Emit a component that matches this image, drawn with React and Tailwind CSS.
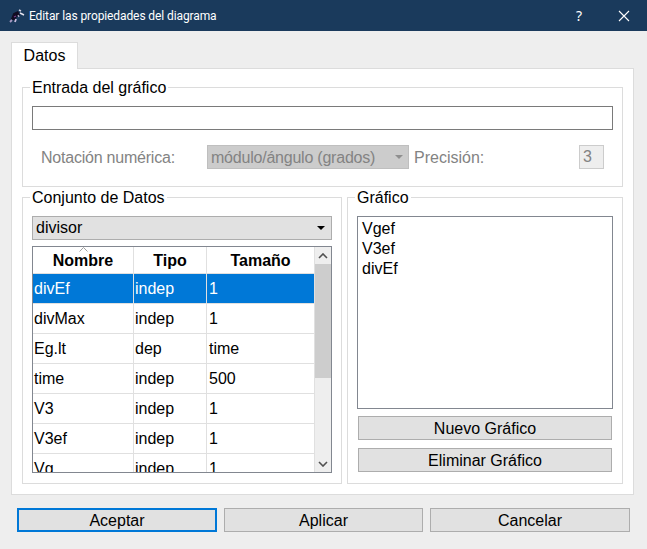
import React from "react";

const rows = [
  ["divEf", "indep", "1"],
  ["divMax", "indep", "1"],
  ["Eg.lt", "dep", "time"],
  ["time", "indep", "500"],
  ["V3", "indep", "1"],
  ["V3ef", "indep", "1"],
  ["Vg", "indep", "1"],
];

function Logo() {
  return (
    <svg width="18" height="16" viewBox="0 0 18 16" className="shrink-0">
      <path d="M5 12 L7 7 L11 5" stroke="#120c22" strokeWidth="4.5" fill="none" />
      <path d="M2 14 L4 12" stroke="#a99ac4" strokeWidth="1.8" fill="none" />
      <path d="M7 14 L8 11" stroke="#c9bfe0" strokeWidth="1.8" fill="none" />
      <path d="M6 9 L8 8" stroke="#7d3f8f" strokeWidth="1.2" fill="none" />
      <path d="M10 7 L11 9" stroke="#b8b0cc" strokeWidth="1.2" fill="none" />
      <path d="M12 5 L16 7" stroke="#e8e6f0" strokeWidth="1.5" fill="none" />
      <path d="M11 2 L13 3" stroke="#d8d4e4" strokeWidth="1.5" fill="none" />
    </svg>
  );
}

function Group({ title, className, children }) {
  return (
    <fieldset className={`border border-[#dcdcdc] px-[9px] ${className}`}>
      <legend className="-ml-[2px] px-[2px] h-[18px] leading-[20px] text-[16px] text-black">{title}</legend>
      {children}
    </fieldset>
  );
}

function Button({ children, className = "border border-[#adadad]" }) {
  return (
    <button className={`h-[24px] pt-[2px] bg-[#e1e1e1] text-[16px] leading-none text-black ${className}`}>
      {children}
    </button>
  );
}

function Chevron({ up }) {
  return (
    <svg width="10" height="6" viewBox="0 0 10 6">
      <path d={up ? "M1 5 L5 1 L9 5" : "M1 1 L5 5 L9 1"} stroke="#505050" strokeWidth="1.6" fill="none" />
    </svg>
  );
}

function DataTable() {
  return (
    <div className="mt-[6px] h-[227px] border border-[#828790] bg-white flex overflow-hidden">
      <div className="w-[281px] shrink-0">
        <div className="relative flex h-[27px] font-bold text-[16px] leading-[27px] text-center border-b border-[#e0e0e0]">
          <div className="w-[101px] border-r border-[#e0e0e0]">Nombre</div>
          <div className="w-[73px] border-r border-[#e0e0e0]">Tipo</div>
          <div className="w-[107px]">Tamaño</div>
          <svg width="9" height="5" viewBox="0 0 9 5" className="absolute left-[46px] top-0">
            <path d="M0.5 4.5 L4.5 0.5 L8.5 4.5" stroke="#a0a0a0" fill="none" />
          </svg>
        </div>
        {rows.map((row, i) => (
          <div
            key={row[0]}
            className={`flex h-[30px] text-[16px] leading-[29px] border-b border-[#e0e0e0] ${i === 0 ? "bg-[#0078d7] text-white" : "text-black"}`}
          >
            <div className="w-[101px] pl-[1px] border-r border-[#e0e0e0]">{row[0]}</div>
            <div className="w-[73px] pl-[1px] border-r border-[#e0e0e0]">{row[1]}</div>
            <div className="w-[107px] pl-[2px]">{row[2]}</div>
          </div>
        ))}
      </div>
      <div className="flex-1 bg-[#eeeeee] flex flex-col border-l border-[#e0e0e0]">
        <div className="h-[17px] flex items-center justify-center shrink-0"><Chevron up /></div>
        <div className="h-[114px] bg-[#cdcdcd] shrink-0" />
        <div className="flex-1" />
        <div className="h-[17px] flex items-center justify-center shrink-0"><Chevron /></div>
      </div>
    </div>
  );
}

export default function App() {
  return (
    <div className="w-[647px] h-[549px] bg-[#eeeeee] overflow-hidden flex flex-col font-['Liberation_Sans',Arial,sans-serif]">
      <div className="h-[31px] bg-[#1a3a5c] flex items-center pl-[8px] text-white shrink-0">
        <Logo />
        <span className="ml-[3px] text-[12px] tracking-[-0.1px] font-['Roboto',sans-serif]">Editar las propiedades del diagrama</span>
        <span className="ml-auto mr-[36px] text-[14px] font-['Noto_Sans',sans-serif]">?</span>
        <svg width="12" height="12" viewBox="0 0 12 12" className="mr-[17px]">
          <path d="M1 1 L11 11 M11 1 L1 11" stroke="#ffffff" strokeWidth="1.1" />
        </svg>
      </div>

      <div className="px-[11px] pt-[11px] shrink-0">
        <div className="relative z-10 -mb-px w-[67px] h-[27px] bg-white border border-b-0 border-[#dcdcdc] text-center text-[16px] leading-[26px] text-black">
          Datos
        </div>
        <div className="h-[427px] w-[623px] bg-white border border-[#dcdcdc] px-[10px] pt-[9px] flex flex-col gap-px">
          <Group title="Entrada del gráfico" className="h-[109px]">
            <div className="mt-[10px] h-[24px] border border-[#7a7a7a] bg-white" />
            <div className="mt-[15px] flex items-center h-[24px] text-[16px] text-[#838383]">
              <span className="ml-[9px] w-[166px] pt-px tracking-[-0.22px]">Notación numérica:</span>
              <div className="w-[202px] h-[24px] bg-[#cccccc] border border-[#bfbfbf] flex items-center pl-[3px] pr-[5px] justify-between">
                <span className="pt-px tracking-[-0.22px]">módulo/ángulo (grados)</span>
                <span className="w-0 h-0 border-x-[4px] border-x-transparent border-t-[4px] border-t-[#8f8f8f]" />
              </div>
              <span className="ml-[5px] w-[165px] pt-px">Precisión:</span>
              <div className="w-[25px] h-[24px] bg-[#eeeeee] border border-[#cccccc] pl-[3px] leading-[22px]">3</div>
            </div>
          </Group>

          <div className="flex gap-[5px]">
            <Group title="Conjunto de Datos" className="w-[320px] h-[296px]">
              <div className="mt-[10px] h-[24px] bg-[#e1e1e1] border border-[#adadad] flex items-center justify-between pl-[3px] pr-[6px] text-[16px] text-black">
                <span>divisor</span>
                <span className="w-0 h-0 border-x-[4px] border-x-transparent border-t-[4px] border-t-black" />
              </div>
              <DataTable />
            </Group>

            <Group title="Gráfico" className="w-[276px] h-[296px]">
              <div className="mt-[10px] h-[193px] border border-[#828790] bg-white px-[4px] py-[2px] text-[16px] leading-[20px] text-black">
                <div>Vgef</div>
                <div>V3ef</div>
                <div>divEf</div>
              </div>
              <div className="mt-[7px] px-px flex flex-col gap-[8px]">
                <Button>Nuevo Gráfico</Button>
                <Button>Eliminar Gráfico</Button>
              </div>
            </Group>
          </div>
        </div>
      </div>

      <div className="mt-[13px] pl-[17px] flex gap-[7px]">
        <Button className="w-[200px] border-2 border-[#0078d7]">Aceptar</Button>
        <Button className="w-[199px] border border-[#adadad]">Aplicar</Button>
        <Button className="w-[200px] border border-[#adadad]">Cancelar</Button>
      </div>
    </div>
  );
}
